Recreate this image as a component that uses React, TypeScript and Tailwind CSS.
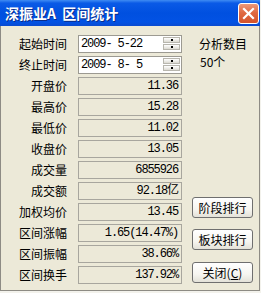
import React from "react";

const cjk = "font-['Noto_Sans_CJK_SC','Noto_Sans',sans-serif]";
const mono = "font-['Liberation_Mono','Noto_Sans_CJK_SC',monospace]";

function Spinner() {
  return (
    <div className="flex flex-col gap-[1px] self-start mt-[1px] mr-[1px]">
      {[0, 1].map((i) => (
        <div
          key={i}
          className="relative w-[17px] h-[6px] bg-[linear-gradient(to_bottom,#ffffff,#dcdad2)] border border-[#b8b6ae]"
        >
          <div className="absolute left-[7px] top-[1px] w-[2px] h-[2px] bg-black" />
        </div>
      ))}
    </div>
  );
}

function DateRow({ label, value }: { label: string; value: string }) {
  return (
    <div className="flex items-center h-[18px]">
      <div className={`w-[66px] text-right text-[12px] leading-none text-black ${cjk}`}>{label}</div>
      <div className="ml-[11px] w-[104px] h-[18px] bg-white border border-[#9c9a92] flex items-center justify-between">
        <span className={`pl-[2px] text-[12px] tracking-[-1.1px] leading-none text-black whitespace-pre ${mono}`}>
          {value}
        </span>
        <Spinner />
      </div>
    </div>
  );
}

function ValueRow({ label, value }: { label: string; value: string }) {
  return (
    <div className="flex items-center h-[18px]">
      <div className={`w-[66px] text-right text-[12px] leading-none text-black ${cjk}`}>{label}</div>
      <div className="ml-[11px] w-[104px] h-[18px] border border-[#a8a69e] flex items-center justify-end pr-[3px]">
        <span className={`text-[12px] tracking-[-1.1px] leading-none text-black whitespace-pre ${mono}`}>
          {value}
        </span>
      </div>
    </div>
  );
}

function Btn({ children, className = "" }: { children: React.ReactNode; className?: string }) {
  return (
    <div
      className={`ml-[10px] w-[61px] h-[21px] rounded-[3px] border border-[#6f6f6f] bg-[linear-gradient(to_bottom,#ffffff_0%,#f6f5f0_60%,#e3e1d8_100%)] flex items-center justify-center text-[12px] leading-none text-black ${cjk} ${className}`}
    >
      {children}
    </div>
  );
}

export default function App() {
  const rows: [string, string][] = [
    ["开盘价", "11.36"],
    ["最高价", "15.28"],
    ["最低价", "11.02"],
    ["收盘价", "13.05"],
    ["成交量", "6855926"],
    ["成交额", "92.18亿"],
    ["加权均价", "13.45"],
    ["区间涨幅", "1.65(14.47%)"],
    ["区间振幅", "38.66%"],
    ["区间换手", "137.92%"],
  ];
  return (
    <div className="w-[261px] h-[293px] bg-[#f3f2ec] overflow-hidden">
      <div className="w-[260px] h-[291px] flex flex-col bg-[#ECE9D8]">
        {/* Title bar */}
        <div className="h-[26px] shrink-0 flex items-center justify-between bg-[linear-gradient(to_bottom,#3f8cf3_0%,#0a5ae6_12%,#0050e0_50%,#0252e4_85%,#0a4bd0_100%)]">
          <div
            className={`pl-[5px] text-white font-bold text-[14px] leading-none whitespace-pre [text-shadow:1px_1px_0_#0a2d8a] ${cjk}`}
          >
            深振业A  区间统计
          </div>
          <div className="mr-[1px] w-[21px] h-[21px] rounded-[3px] border border-white bg-[linear-gradient(to_bottom,#ec9a7c_0%,#e06a43_45%,#d4532b_100%)] flex items-center justify-center">
            <svg width="13" height="13" viewBox="0 0 13 13">
              <path d="M2 2 L11 11 M11 2 L2 11" stroke="#ffffff" strokeWidth="2.2" strokeLinecap="square" />
            </svg>
          </div>
        </div>
        {/* Body */}
        <div className="flex-1 flex border-l border-r border-b border-[#8d8b84]">
          <div className="flex flex-col gap-[3px] pt-[9px]">
            <DateRow label="起始时间" value="2009- 5-22" />
            <DateRow label="终止时间" value="2009- 8- 5" />
            {rows.map(([l, v]) => (
              <ValueRow key={l} label={l} value={v} />
            ))}
          </div>
          <div className="flex flex-col pt-[9px]">
            <div className={`ml-[17px] h-[18px] flex items-center text-[12px] leading-none text-black ${cjk}`}>
              分析数目
            </div>
            <div className={`ml-[18px] h-[18px] flex items-center text-[12px] leading-none text-black ${cjk}`}>
              50个
            </div>
            <Btn className="mt-[126px]">阶段排行</Btn>
            <Btn className="mt-[11px]">板块排行</Btn>
            <Btn className="mt-[12px]">
              关闭(<span className="underline">C</span>)
            </Btn>
          </div>
        </div>
      </div>
    </div>
  );
}
